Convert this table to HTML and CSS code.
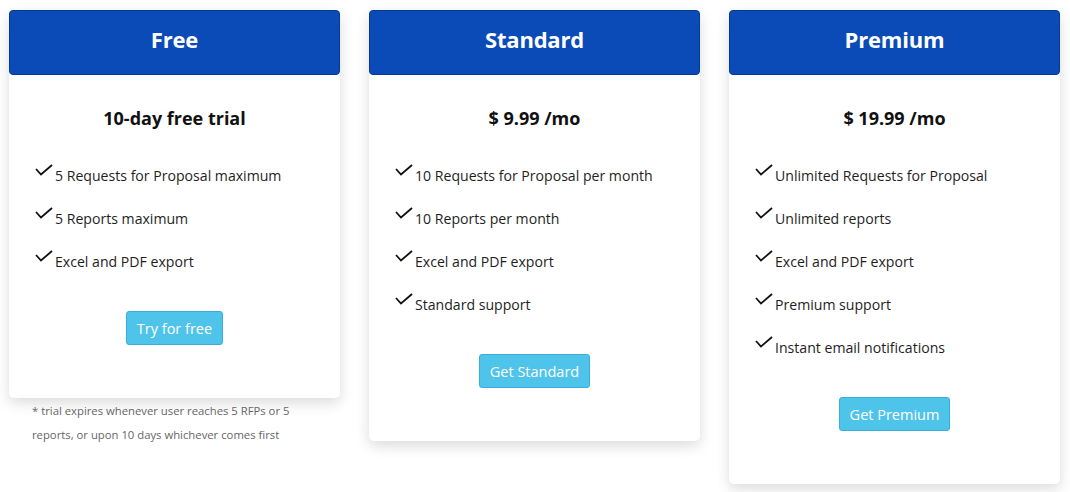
FILE: index.html
```html
<!DOCTYPE html>
<html>
<head>
<meta charset="utf-8">
<link rel="stylesheet" href="styles.css">
</head>
<body>
<div class="plans">
  <div class="col">
    <div class="card">
      <div class="card-head">Free</div>
      <div class="card-body">
        <div class="price">10-day free trial</div>
        <ul class="features">
          <li><svg class="check" viewBox="0 0 18 12"><path d="M1 5 L6 10.5 L17 1"/></svg><span>5 Requests for Proposal maximum</span></li>
          <li><svg class="check" viewBox="0 0 18 12"><path d="M1 5 L6 10.5 L17 1"/></svg><span>5 Reports maximum</span></li>
          <li><svg class="check" viewBox="0 0 18 12"><path d="M1 5 L6 10.5 L17 1"/></svg><span>Excel and PDF export</span></li>
        </ul>
        <div class="cta"><button class="btn">Try for free</button></div>
      </div>
    </div>
    <p class="note">* trial expires whenever user reaches 5 RFPs or 5 reports, or upon 10 days whichever comes first</p>
  </div>
  <div class="col">
    <div class="card">
      <div class="card-head">Standard</div>
      <div class="card-body">
        <div class="price">$ 9.99 /mo</div>
        <ul class="features">
          <li><svg class="check" viewBox="0 0 18 12"><path d="M1 5 L6 10.5 L17 1"/></svg><span>10 Requests for Proposal per month</span></li>
          <li><svg class="check" viewBox="0 0 18 12"><path d="M1 5 L6 10.5 L17 1"/></svg><span>10 Reports per month</span></li>
          <li><svg class="check" viewBox="0 0 18 12"><path d="M1 5 L6 10.5 L17 1"/></svg><span>Excel and PDF export</span></li>
          <li><svg class="check" viewBox="0 0 18 12"><path d="M1 5 L6 10.5 L17 1"/></svg><span>Standard support</span></li>
        </ul>
        <div class="cta"><button class="btn">Get Standard</button></div>
      </div>
    </div>
  </div>
  <div class="col">
    <div class="card">
      <div class="card-head">Premium</div>
      <div class="card-body">
        <div class="price">$ 19.99 /mo</div>
        <ul class="features">
          <li><svg class="check" viewBox="0 0 18 12"><path d="M1 5 L6 10.5 L17 1"/></svg><span>Unlimited Requests for Proposal</span></li>
          <li><svg class="check" viewBox="0 0 18 12"><path d="M1 5 L6 10.5 L17 1"/></svg><span>Unlimited reports</span></li>
          <li><svg class="check" viewBox="0 0 18 12"><path d="M1 5 L6 10.5 L17 1"/></svg><span>Excel and PDF export</span></li>
          <li><svg class="check" viewBox="0 0 18 12"><path d="M1 5 L6 10.5 L17 1"/></svg><span>Premium support</span></li>
          <li><svg class="check" viewBox="0 0 18 12"><path d="M1 5 L6 10.5 L17 1"/></svg><span>Instant email notifications</span></li>
        </ul>
        <div class="cta"><button class="btn">Get Premium</button></div>
      </div>
    </div>
  </div>
</div>
</body>
</html>
```
FILE: styles.css
```css
* { box-sizing: border-box; }
html, body { margin: 0; background: #fff; }
body {
  font-family: "Open Sans", "Noto Sans", "DejaVu Sans", sans-serif;
  color: #1e1e1e;
}
.plans {
  display: flex;
  align-items: flex-start;
  gap: 29px;
  padding: 10px 9px;
}
.col {
  width: 331px;
  flex: none;
}
.card {
  background: #fff;
  border-radius: 5px;
  box-shadow: 0 5px 14px rgba(0, 0, 0, 0.14);
}
.card-head {
  height: 65px;
  padding-bottom: 7px;
  background: #0a4bb8;
  border: 1px solid #053a93;
  border-radius: 4px;
  color: #fff;
  font-size: 22px;
  font-weight: 700;
  display: flex;
  align-items: center;
  justify-content: center;
  letter-spacing: -0.2px;
}
.card-body {
  padding: 29px 0 53px;
}
.price {
  text-align: center;
  font-size: 18px;
  font-weight: 700;
  line-height: 28px;
  color: #111;
}
.features {
  list-style: none;
  margin: 22px 0 28px;
  padding: 0 0 0 26px;
}
.features li {
  display: flex;
  align-items: flex-start;
  height: 43px;
  line-height: 43px;
  font-size: 14.1px;
}
.check {
  width: 18px;
  height: 12px;
  margin-top: 10px;
  margin-right: 2px;
  flex: none;
  fill: none;
  stroke: #111;
  stroke-width: 1.8;
}
.cta {
  text-align: center;
}
.btn {
  height: 34px;
  padding: 0 10px;
  background: #4fc4ea;
  border: 1px solid #39aedb;
  border-radius: 3px;
  color: #fff;
  font-family: inherit;
  font-size: 14.5px;
  cursor: pointer;
}
.note {
  margin: 0;
  padding: 1px 23px 0;
  font-size: 11.3px;
  line-height: 24px;
  color: #666;
}
```
